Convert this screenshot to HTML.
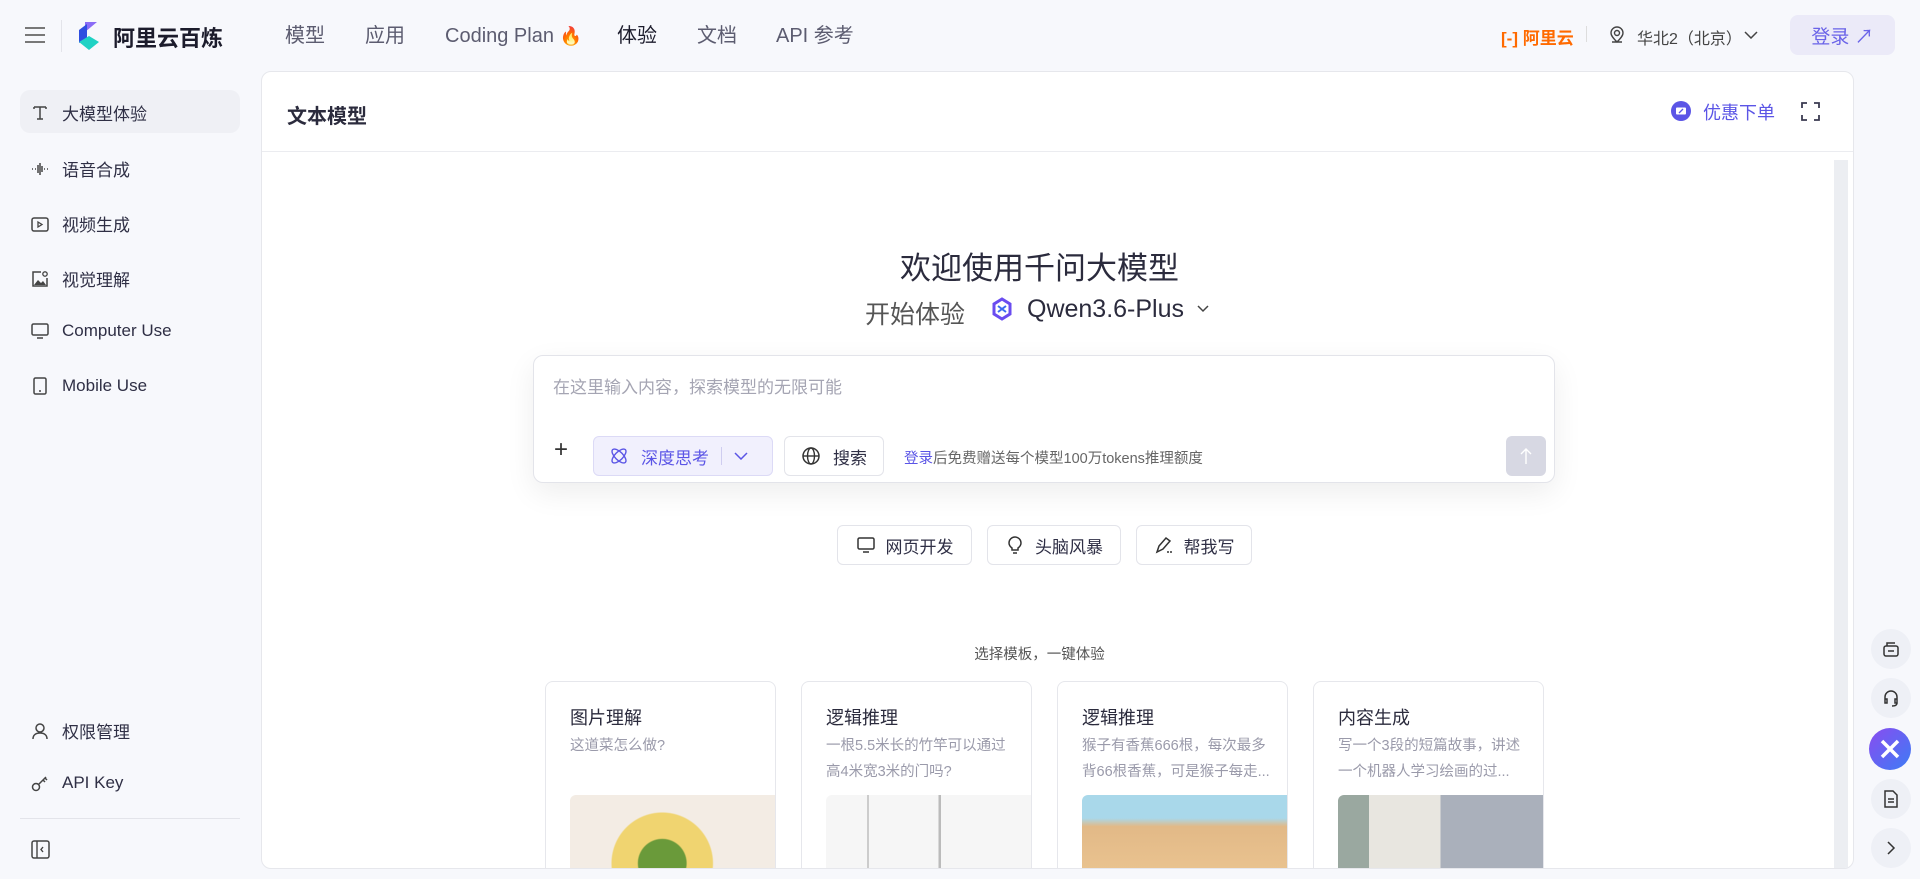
<!DOCTYPE html>
<html><head><meta charset="utf-8"><style>
*{box-sizing:border-box;margin:0;padding:0}
body{width:1920px;height:879px;overflow:hidden;background:#f7f8fc;font-family:"Liberation Sans","Noto Sans CJK SC",sans-serif;color:#2b2b3d;position:relative}
.a{position:absolute}
.nav{font-size:20px;color:#5c5c70;top:22px;line-height:28px;height:28px;white-space:nowrap}
.si{position:absolute;left:30px;font-size:17px;color:#2f2f45;display:flex;align-items:center}
.si svg{width:20px;height:20px;margin-right:12px}
.btn{position:absolute;border:1px solid #e3e4ea;border-radius:6px;background:#fff;display:flex;align-items:center;justify-content:center;font-size:17px;color:#2f2f45}
.card{position:absolute;top:609px;width:231px;height:220px;border:1px solid #e6e7ec;border-radius:8px;background:#fff;overflow:hidden}
.card h4{position:absolute;left:24px;top:22px;font-size:18px;font-weight:normal;color:#2b2b3d}
.card p{position:absolute;left:24px;top:51px;width:192px;font-size:14.5px;line-height:26px;color:#9a9aaa}
.card .img{position:absolute;left:24px;top:113px;right:0;bottom:0;border-radius:6px 0 0 0}
.fb{position:absolute;left:1871px;width:40px;height:40px;border-radius:50%;background:#eef0f6;display:flex;align-items:center;justify-content:center}
</style></head><body>
<svg class="a" style="left:24px;top:26px" width="22" height="18" viewBox="0 0 22 18"><path d="M1 2h20M1 9h20M1 16h20" stroke="#666" stroke-width="1.8"/></svg>
<div class="a" style="left:61px;top:20px;width:1px;height:32px;background:#e3e4ea"></div>
<svg class="a" style="left:77px;top:20px" width="24" height="32" viewBox="0 0 24 32"><path d="M8 2l12 0-12 10z" fill="#8b6cf6"/><path d="M2 10l8-6v14l-8 5z" fill="#2f4ee0"/><path d="M2 22l10-6 10 6-10 8z" fill="#1fd2c4"/></svg>
<div class="a" style="left:113px;top:21px;font-size:22px;font-weight:bold;color:#1c1c2c">阿里云百炼</div>
<div class="a nav" style="left:285px">模型</div>
<div class="a nav" style="left:365px">应用</div>
<div class="a nav" style="left:445px">Coding Plan <span style="color:#f08a2a;font-size:18px">🔥</span></div>
<div class="a nav" style="left:617px;color:#1c1c2c">体验</div>
<div class="a nav" style="left:697px">文档</div>
<div class="a nav" style="left:776px">API 参考</div>
<div class="a" style="left:1501px;top:24px;font-size:17px;font-weight:bold;color:#ff6a00">[-] 阿里云</div>
<div class="a" style="left:1586px;top:26px;width:1px;height:16px;background:#ddd"></div>
<svg class="a" style="left:1609px;top:26px" width="16" height="18" viewBox="0 0 16 18"><circle cx="8" cy="7" r="2.5" fill="none" stroke="#444" stroke-width="1.4"/><path d="M8 16C3 11 2 9 2 7a6 6 0 0112 0c0 2-1 4-6 9z M3 16h10" fill="none" stroke="#444" stroke-width="1.4"/></svg>
<div class="a" style="left:1637px;top:25px;font-size:16px;color:#444">华北2（北京）</div>
<svg class="a" style="left:1744px;top:31px" width="14" height="8"><path d="M1 1l6 6 6-6" fill="none" stroke="#444" stroke-width="1.5"/></svg>
<div class="a" style="left:1790px;top:15px;width:105px;height:40px;border-radius:8px;background:#ebeaf8;color:#6a63e8;font-size:19px;display:flex;align-items:center;justify-content:center">登录 ↗</div>
<div class="a" style="left:20px;top:90px;width:220px;height:43px;border-radius:10px;background:#eff0f5"></div>
<div class="si" style="top:100px"><svg viewBox="0 0 20 20"><path d="M4 4h12M4 4v2M16 4v2M10 4v12M7 16h6" stroke="#444" stroke-width="1.5" fill="none"/></svg>大模型体验</div>
<div class="si" style="top:156px"><svg viewBox="0 0 20 20"><path d="M2 10h1M5 10h1M8 6v8M10 4v12M12 7v6M14 10h1M17 10h1" stroke="#444" stroke-width="1.5"/></svg>语音合成</div>
<div class="si" style="top:211px"><svg viewBox="0 0 20 20"><rect x="2" y="4" width="16" height="13" rx="2" fill="none" stroke="#444" stroke-width="1.5"/><path d="M8 8l4 2.5-4 2.5z" fill="none" stroke="#444" stroke-width="1.3"/></svg>视频生成</div>
<div class="si" style="top:266px"><svg viewBox="0 0 20 20"><path d="M11 3H3v14h14V9" fill="none" stroke="#444" stroke-width="1.5"/><circle cx="15" cy="5" r="2.2" fill="none" stroke="#444" stroke-width="1.3"/><path d="M4 16l4-5 3 3 2-2 3 4z" fill="#444"/></svg>视觉理解</div>
<div class="si" style="top:321px"><svg viewBox="0 0 20 20"><rect x="2" y="3" width="16" height="11" rx="1.5" fill="none" stroke="#444" stroke-width="1.5"/><path d="M7 17h6" stroke="#444" stroke-width="1.5"/></svg>Computer Use</div>
<div class="si" style="top:376px"><svg viewBox="0 0 20 20"><rect x="4" y="2" width="12" height="16" rx="1.5" fill="none" stroke="#444" stroke-width="1.5"/><path d="M9 15h2" stroke="#444" stroke-width="1.5"/></svg>Mobile Use</div>
<div class="si" style="top:718px"><svg viewBox="0 0 20 20"><circle cx="10" cy="7" r="4" fill="none" stroke="#444" stroke-width="1.5"/><path d="M3 18c0-4 3-6 7-6s7 2 7 6" fill="none" stroke="#444" stroke-width="1.5"/></svg>权限管理</div>
<div class="si" style="top:773px"><svg viewBox="0 0 20 20"><circle cx="6" cy="14" r="3.5" fill="none" stroke="#444" stroke-width="1.5"/><path d="M8.5 11.5L16 4M13 7l2 2M15 5l2 2" stroke="#444" stroke-width="1.5" fill="none"/></svg>API Key</div>
<div class="a" style="left:20px;top:818px;width:220px;height:1px;background:#e3e4ea"></div>
<svg class="a" style="left:31px;top:840px" width="19" height="19" viewBox="0 0 19 19"><rect x="1" y="1" width="17" height="17" rx="2" fill="none" stroke="#444" stroke-width="1.5"/><path d="M6 1v17M12 7l-2 2.5 2 2.5" stroke="#444" stroke-width="1.4" fill="none"/></svg>
<div class="a" style="left:261px;top:71px;width:1593px;height:798px;background:#fff;border:1px solid #e6e7ec;border-radius:10px;overflow:hidden">
  <div class="a" style="left:25px;top:28px;font-size:20px;font-weight:bold;color:#2b2b3d">文本模型</div>
  <div class="a" style="left:0;top:79px;width:100%;height:1px;background:#ebecf0"></div>
  <svg class="a" style="left:1409px;top:29px" width="20" height="20"><circle cx="10" cy="10" r="10" fill="#5b55e6"/><rect x="5" y="6.5" width="10" height="7" rx="1" fill="#fff"/><path d="M8 12l4-4" stroke="#5b55e6" stroke-width="1.3"/></svg>
  <div class="a" style="left:1441px;top:27px;font-size:18px;color:#5b55e6">优惠下单</div>
  <svg class="a" style="left:1539px;top:30px" width="19" height="19" viewBox="0 0 19 19"><path d="M1 6V1h5M13 1h5v5M18 13v5h-5M6 18H1v-5" fill="none" stroke="#3a3a50" stroke-width="1.8"/></svg>
  <div class="a" style="left:1572px;top:88px;width:14px;height:710px;background:#eceef2"></div>
  <div class="a" style="left:0;width:100%;text-align:center;top:171px;font-size:31px;color:#2b2b3d;padding-right:36px">欢迎使用千问大模型</div>
  <div class="a" style="left:603px;top:223px;font-size:25px;color:#555">开始体验</div>
  <svg class="a" style="left:728px;top:225px" width="24" height="24" viewBox="0 0 24 24"><path d="M12 2l8 5v10l-8 5-8-5V7z" fill="none" stroke="#6a4cf0" stroke-width="3"/><path d="M8 9l8 6M16 9l-8 6" stroke="#3b6cf0" stroke-width="2"/></svg>
  <div class="a" style="left:765px;top:223px;font-size:25px;color:#2b2b3d">Qwen3.6-Plus</div>
  <svg class="a" style="left:935px;top:233px" width="12" height="8"><path d="M1 1l5 5 5-5" fill="none" stroke="#444" stroke-width="1.5"/></svg>
  <div class="a" style="left:271px;top:283px;width:1022px;height:128px;border:1px solid #e3e4ea;border-radius:10px;background:#fff;box-shadow:0 10px 30px rgba(0,0,0,0.07)">
    <div class="a" style="left:19px;top:17px;font-size:17px;color:#a5a5b3">在这里输入内容，探索模型的无限可能</div>
    <div class="a" style="left:20px;top:82px;font-size:24px;color:#333;line-height:24px">+</div>
    <div class="a" style="left:59px;top:80px;width:180px;height:40px;border:1px solid #dcdaf6;border-radius:6px;background:#f1f0fd;color:#5b55e6;font-size:17px;display:flex;align-items:center;padding-left:14px">
      <svg width="22" height="22" viewBox="0 0 22 22"><ellipse cx="11" cy="11" rx="4" ry="9" transform="rotate(45 11 11)" fill="none" stroke="#5b55e6" stroke-width="1.4"/><ellipse cx="11" cy="11" rx="4" ry="9" transform="rotate(-45 11 11)" fill="none" stroke="#5b55e6" stroke-width="1.4"/></svg>
      <span style="margin-left:11px">深度思考</span><span style="margin-left:12px;width:1px;height:18px;background:#cfcdf0"></span>
      <svg style="margin-left:12px" width="14" height="8"><path d="M1 1l6 6 6-6" fill="none" stroke="#5b55e6" stroke-width="1.5"/></svg>
    </div>
    <div class="btn" style="left:250px;top:80px;width:100px;height:40px;border-radius:6px"><svg width="20" height="20" viewBox="0 0 20 20" style="margin-right:12px"><circle cx="10" cy="10" r="8" fill="none" stroke="#333" stroke-width="1.5"/><ellipse cx="10" cy="10" rx="3.5" ry="8" fill="none" stroke="#333" stroke-width="1.4"/><path d="M2 10h16" stroke="#333" stroke-width="1.4"/></svg>搜索</div>
    <div class="a" style="left:370px;top:91px;font-size:14.5px;color:#666"><span style="color:#5b55e6">登录</span>后免费赠送每个模型100万tokens推理额度</div>
    <div class="a" style="left:972px;top:80px;width:40px;height:40px;border-radius:6px;background:#d7d8e3;display:flex;align-items:center;justify-content:center"><svg width="14" height="18"><path d="M7 17V2M2 7l5-5 5 5" fill="none" stroke="#fff" stroke-width="1.4"/></svg></div>
  </div>
  <div class="btn" style="left:575px;top:453px;width:135px;height:40px"><svg width="20" height="20" viewBox="0 0 20 20" style="margin-right:10px"><rect x="2" y="3" width="16" height="11" rx="1.5" fill="none" stroke="#333" stroke-width="1.5"/><path d="M7 17h6" stroke="#333" stroke-width="1.5"/></svg>网页开发</div>
  <div class="btn" style="left:725px;top:453px;width:134px;height:40px"><svg width="20" height="20" viewBox="0 0 20 20" style="margin-right:10px"><path d="M7 13c-2-1.5-3-3-3-5a6 6 0 0112 0c0 2-1 3.5-3 5v2H7z M8 18h4" fill="none" stroke="#333" stroke-width="1.5"/></svg>头脑风暴</div>
  <div class="btn" style="left:874px;top:453px;width:116px;height:40px"><svg width="20" height="20" viewBox="0 0 20 20" style="margin-right:10px"><path d="M3 17l2-6 7-8 4 3-7 8z M13 17h2M16 17h2" fill="none" stroke="#333" stroke-width="1.5"/></svg>帮我写</div>
  <div class="a" style="left:0;width:100%;text-align:center;top:571px;font-size:14.5px;color:#555;padding-right:36px">选择模板，一键体验</div>
  <div class="card" style="left:283px"><h4>图片理解</h4><p>这道菜怎么做?</p><div class="img" style="background:radial-gradient(circle at 45% 65%,#6a9a3a 0 18%,#f0d470 19% 38%,#f3ece4 39%),#eee"></div></div>
  <div class="card" style="left:539px"><h4>逻辑推理</h4><p>一根5.5米长的竹竿可以通过高4米宽3米的门吗?</p><div class="img" style="background:linear-gradient(90deg,#f6f6f6 0 20%,#ccc 20% 21%,#f6f6f6 21% 55%,#bbb 55% 56%,#f6f6f6 56%)"></div></div>
  <div class="card" style="left:795px"><h4>逻辑推理</h4><p>猴子有香蕉666根，每次最多背66根香蕉，可是猴子每走...</p><div class="img" style="background:linear-gradient(180deg,#a9d8ea 0 22%,#e2b987 30%,#eec995 100%)"></div></div>
  <div class="card" style="left:1051px"><h4>内容生成</h4><p>写一个3段的短篇故事，讲述一个机器人学习绘画的过...</p><div class="img" style="background:linear-gradient(90deg,#9aa8a0 0 15%,#e8e6e0 15% 50%,#aab0bb 50%)"></div></div>
</div>
<div class="fb" style="top:629px"><svg width="18" height="18" viewBox="0 0 18 18"><rect x="2" y="6" width="14" height="10" rx="2" fill="none" stroke="#333" stroke-width="1.5"/><path d="M5 6V3h8M6 11h6" stroke="#333" stroke-width="1.5" fill="none"/></svg></div>
<div class="fb" style="top:678px"><svg width="18" height="18" viewBox="0 0 18 18"><path d="M3 11V8a6 6 0 0112 0v3M3 10h2v4H3zM13 10h2v4h-2zM15 14c0 2-2 3-5 3" fill="none" stroke="#333" stroke-width="1.5"/></svg></div>
<div class="a" style="left:1869px;top:728px;width:42px;height:42px;border-radius:50%;background:linear-gradient(135deg,#8a4cf0,#3c7cf5);display:flex;align-items:center;justify-content:center"><svg width="22" height="22"><path d="M3 3l16 16M19 3L3 19" stroke="#fff" stroke-width="3.5"/></svg></div>
<div class="fb" style="top:779px"><svg width="18" height="18" viewBox="0 0 18 18"><path d="M3 1h8l4 4v12H3z M6 9h6M6 12h6" fill="none" stroke="#333" stroke-width="1.5"/></svg></div>
<div class="fb" style="top:828px"><svg width="10" height="16"><path d="M2 2l6 6-6 6" fill="none" stroke="#333" stroke-width="1.5"/></svg></div>
</body></html>
